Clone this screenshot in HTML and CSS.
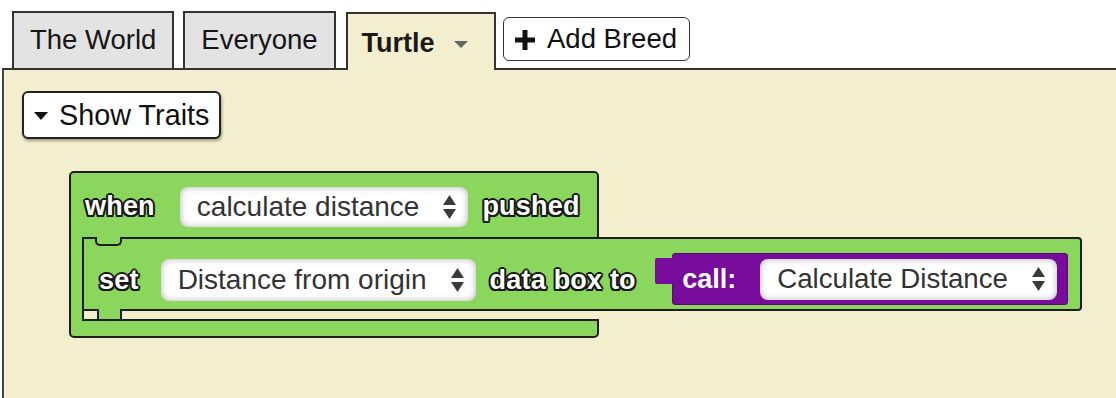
FILE: index.html
```html
<!DOCTYPE html>
<html>
<head>
<meta charset="utf-8">
<link rel="stylesheet" href="styles.css">
</head>
<body>
<div class="tabbar">
  <div class="tab tab-first">The World</div>
  <div class="tab tab-second">Everyone</div>
  <div class="tab tab-active"><span class="tab-title">Turtle</span><span class="caret"></span></div>
  <div class="add-breed">
    <svg class="plus" width="20" height="20" viewBox="0 0 20 20"><rect x="7.5" y="0" width="5" height="20" fill="#111"/><rect x="0" y="7.5" width="20" height="5" fill="#111"/></svg>
    <span>Add Breed</span>
  </div>
</div>
<div class="panel">
  <div class="show-traits"><span class="tri"></span><span>Show Traits</span></div>
  <div class="cblock">
    <div class="ctop">
      <span class="kw">when</span>
      <div class="dd dd-top"><span>calculate distance</span><svg class="arrows" width="13" height="24" viewBox="0 0 13 24"><polygon points="6.5,0 13,10 0,10" fill="#3a3a3a"/><polygon points="0,14 13,14 6.5,24" fill="#3a3a3a"/></svg></div>
      <span class="kw kw-pushed">pushed</span>
    </div>
    <div class="slot">
      <div class="stmt">
        <span class="kw">set</span>
        <div class="dd dd-set"><span>Distance from origin</span><svg class="arrows" width="13" height="24" viewBox="0 0 13 24"><polygon points="6.5,0 13,10 0,10" fill="#3a3a3a"/><polygon points="0,14 13,14 6.5,24" fill="#3a3a3a"/></svg></div>
        <span class="kw kw-data">data box to</span>
        <div class="call">
          <span class="call-lbl">call:</span>
          <div class="dd dd-call"><span>Calculate Distance</span><svg class="arrows" width="13" height="24" viewBox="0 0 13 24"><polygon points="6.5,0 13,10 0,10" fill="#3a3a3a"/><polygon points="0,14 13,14 6.5,24" fill="#3a3a3a"/></svg></div>
        </div>
      </div>
    </div>
    <div class="cbottom"></div>
  </div>
</div>
</body>
</html>
```

FILE: styles.css
```css
body {
  margin: 0;
  background: #ffffff;
  font-family: "Liberation Sans", Arial, sans-serif;
  width: 1116px;
  height: 398px;
  overflow: hidden;
}

.tabbar {
  display: flex;
  align-items: flex-end;
  height: 68px;
  padding-left: 12px;
}

.tab {
  box-sizing: border-box;
  height: 57px;
  border: 2px solid #333;
  border-bottom: 0;
  background: #e3e3e3;
  color: #151515;
  font-size: 27.5px;
  display: flex;
  align-items: center;
  padding: 0 16px 1px 16px;
}

.tab-first { margin-right: 9px; }
.tab-second { margin-right: 10px; }

.tab-active {
  position: relative;
  z-index: 2;
  height: 58px;
  margin-bottom: -2px;
  width: 150px;
  background: #f3eecd;
  padding: 2px 0 0 14px;
}

.tab-title {
  font-weight: bold;
  font-size: 27px;
  color: #1a1a1a;
}

.caret {
  width: 0;
  height: 0;
  border-left: 7px solid transparent;
  border-right: 7px solid transparent;
  border-top: 7px solid #666;
  margin-left: 19px;
  margin-top: 2px;
}

.add-breed {
  align-self: flex-start;
  margin-top: 17px;
  margin-left: 7px;
  box-sizing: border-box;
  height: 44px;
  border: 1.5px solid #333;
  border-radius: 6px;
  background: #fff;
  display: flex;
  align-items: center;
  gap: 12px;
  padding: 0 12px 0 11.5px;
  font-size: 27.5px;
  color: #111;
}

.plus { display: block; margin-top: 1px; }

.panel {
  margin-left: 2px;
  width: 1130px;
  height: 340px;
  box-sizing: border-box;
  border-top: 2px solid #333;
  border-left: 2px solid #444;
  background: #f3eecd;
  padding: 21px 0 0 18px;
}

.show-traits {
  width: fit-content;
  box-sizing: border-box;
  height: 48px;
  display: flex;
  align-items: center;
  border: 2px solid #222;
  border-radius: 6px;
  background: #fff;
  box-shadow: 1px 2px 3px rgba(0, 0, 0, 0.35);
  padding: 0 10px 0 10px;
  font-size: 28.8px;
  color: #111;
}

.tri {
  width: 0;
  height: 0;
  border-left: 7px solid transparent;
  border-right: 7px solid transparent;
  border-top: 8px solid #111;
  margin-right: 11px;
  margin-top: 2px;
}

/* Block */
.cblock {
  margin-top: 32px;
  margin-left: 47px;
  width: 530px;
  box-sizing: border-box;
  background: #8bd65c;
  border: 2px solid #1e1e1e;
  border-radius: 5px;
}

.ctop {
  height: 64px;
  box-sizing: border-box;
  display: flex;
  align-items: center;
  padding: 3px 0 0 14px;
}

.kw {
  font-weight: bold;
  font-size: 27px;
  color: #fff;
  letter-spacing: 0.2px;
  text-shadow:
    -2px 0 #161616, 2px 0 #161616, 0 -2px #161616, 0 2px #161616,
    -1.5px -1.5px #161616, 1.5px -1.5px #161616, -1.5px 1.5px #161616, 1.5px 1.5px #161616;
}

.dd {
  box-sizing: border-box;
  display: flex;
  align-items: center;
  gap: 24px;
  padding: 0 12px 0 17px;
  background: #fff;
  border-radius: 8px;
  box-shadow: inset 0 0 7px rgba(0, 0, 0, 0.3);
  font-size: 28px;
  color: #333;
}

.arrows { display: block; }

.dd-top {
  height: 40px;
  margin-left: 25px;
  margin-right: 14px;
}

.slot {
  width: 1000px;
  height: 82px;
  box-sizing: border-box;
  margin-left: 11px;
  border-left: 2px solid #1e1e1e;
  background: #f3eecd;
}

.stmt {
  position: relative;
  width: 1000px;
  height: 74px;
  box-sizing: border-box;
  margin-left: -2px;
  background: #8bd65c;
  border: 2px solid #1e1e1e;
  border-radius: 2px 4px 4px 2px;
  display: flex;
  align-items: center;
  padding: 12px 12px 0 15px;
}

.stmt::before {
  content: "";
  position: absolute;
  left: 11px;
  top: -2px;
  width: 27px;
  height: 9px;
  box-sizing: border-box;
  background: #8bd65c;
  border: 2px solid #1e1e1e;
  border-top: 0;
  border-radius: 0 0 5px 5px;
}

.stmt::after {
  content: "";
  position: absolute;
  left: 13px;
  top: 100%;
  width: 25px;
  height: 10px;
  box-sizing: border-box;
  background: #8bd65c;
  border-left: 2px solid #1e1e1e;
  border-right: 2px solid #1e1e1e;
}

.dd-set {
  height: 42px;
  margin-left: 22px;
  margin-right: 14px;
}

.call {
  position: relative;
  margin-left: auto;
  height: 52px;
  box-sizing: border-box;
  background: #770b9b;
  border: 1px solid #5a0a76;
  border-radius: 3px;
  display: flex;
  align-items: center;
  padding: 0 10px 0 9px;
  margin-top: -2px;
}

.call::before {
  content: "";
  position: absolute;
  left: -18px;
  top: 4px;
  width: 18px;
  height: 26px;
  background: #770b9b;
  border-radius: 2px 0 0 2px;
}

.call-lbl {
  font-weight: bold;
  font-size: 27px;
  color: #fff;
  margin-right: 24px;
}

.dd-call {
  height: 41px;
  font-size: 27.7px;
}

.cbottom {
  margin-left: 11px;
  height: 17px;
  box-sizing: border-box;
  border-top: 2px solid #1e1e1e;
}
```
